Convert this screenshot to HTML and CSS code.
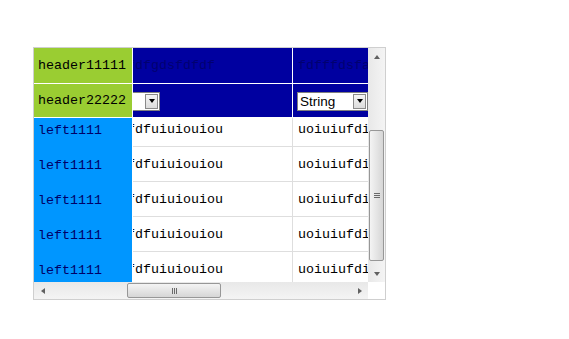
FILE: index.html
```html
<!DOCTYPE html>
<html lang="en">
<head>
  <meta charset="UTF-8">
  <title>Frozen Grid</title>
  <link rel="stylesheet" href="styles.css">
</head>
<body>
  <div class="grid">
    <div class="main">
      <div class="frozen">
        <div class="fhead row1">header11111</div>
        <div class="fhead row2">header22222</div>
        <div class="fbody">
          <div class="fbody-inner">
            <div class="fcell">left1111</div>
            <div class="fcell">left1111</div>
            <div class="fcell">left1111</div>
            <div class="fcell">left1111</div>
            <div class="fcell">left1111</div>
          </div>
        </div>
      </div>
      <div class="data">
        <div class="data-inner">
          <div class="drow hrow row1">
            <div class="dcell col-a">fdfgdsfdfdf</div>
            <div class="dcell col-b">fdfffdsfadf</div>
          </div>
          <div class="drow hrow row2">
            <div class="dcell col-a">
              <div class="sel sel-small"><span class="sel-text"></span><span class="sel-btn"><i class="tri-down"></i></span></div>
            </div>
            <div class="dcell col-b">
              <div class="sel"><span class="sel-text">String</span><span class="sel-btn"><i class="tri-down"></i></span></div>
            </div>
          </div>
          <div class="dbody">
            <div class="dbody-inner">
              <div class="drow brow"><div class="dcell col-a">fdfuiuiouiou</div><div class="dcell col-b">uoiuiufdiuuu</div></div>
              <div class="drow brow"><div class="dcell col-a">fdfuiuiouiou</div><div class="dcell col-b">uoiuiufdiuuu</div></div>
              <div class="drow brow"><div class="dcell col-a">fdfuiuiouiou</div><div class="dcell col-b">uoiuiufdiuuu</div></div>
              <div class="drow brow"><div class="dcell col-a">fdfuiuiouiou</div><div class="dcell col-b">uoiuiufdiuuu</div></div>
              <div class="drow brow"><div class="dcell col-a">fdfuiuiouiou</div><div class="dcell col-b">uoiuiufdiuuu</div></div>
            </div>
          </div>
        </div>
      </div>
    </div>
    <!-- fake scrollbars -->
    <div class="vbar">
      <div class="sb-btn"><i class="arr arr-up"></i></div>
      <div class="vtrack"><div class="thumb vthumb"><span class="grip-v"></span></div></div>
      <div class="sb-btn"><i class="arr arr-down"></i></div>
    </div>
    <div class="hbar">
      <div class="sb-btn"><i class="arr arr-left"></i></div>
      <div class="htrack"><div class="thumb hthumb"><span class="grip-h"></span></div></div>
      <div class="sb-btn"><i class="arr arr-right"></i></div>
    </div>
    <div class="corner"></div>
  </div>
</body>
</html>
```

FILE: styles.css
```css
body {
  margin: 0;
  padding: 47px 0 0 33px;
  background: #fff;
  font-family: 'Liberation Mono', 'Courier New', monospace;
  font-size: 13.33px;
}
.grid {
  width: 351px;
  border: 1px solid #cfcfcf;
  display: grid;
  grid-template-columns: 334px 17px;
  grid-template-rows: 234px 17px;
}
.main {
  display: flex;
  overflow: hidden;
}
/* frozen left column */
.frozen {
  width: 98px;
  flex: none;
  border-right: 1px solid #fff;
  display: flex;
  flex-direction: column;
}
.fhead {
  background: #9acd32;
  color: #000;
  border-bottom: 1px solid #fff;
  padding-left: 4px;
  display: flex;
  align-items: center;
}
.row1 { height: 35px; }
.row2 { height: 33px; }
.fbody {
  flex: 1;
  overflow: hidden;
  background: #0096ff;
}
.fbody-inner { margin-top: -5px; }
.fcell {
  height: 35px;
  padding-left: 4px;
  display: flex;
  align-items: center;
  color: #000066;
}
/* scrolled data area */
.data {
  flex: 1;
  overflow: hidden;
  display: flex;
  flex-direction: column;
}
.data-inner {
  margin-left: -16px;
  display: flex;
  flex-direction: column;
  height: 100%;
}
.drow {
  display: flex;
  flex: none;
}
.dcell {
  flex: none;
  white-space: nowrap;
  overflow: hidden;
  display: flex;
  align-items: center;
  padding-left: 5px;
  box-sizing: border-box;
}
.col-a { width: 176px; }
.col-b { width: 160px; }
.hrow .col-a, .brow .col-a { padding-left: 10px; }
.hrow {
  background: #0000a0;
  border-bottom: 1px solid #fff;
  color: #000070;
}
.hrow .col-a { border-right: 1px solid #fff; }
.hrow.row2 .col-a { padding-left: 12px; }
.hrow.row2 .col-b { padding-left: 4px; }
.dbody {
  flex: 1;
  overflow: hidden;
}
.dbody-inner { margin-top: -6px; }
.brow {
  height: 35px;
  box-sizing: border-box;
  border-bottom: 1px solid #dedede;
  color: #000;
  background: #fff;
}
.brow .col-a { border-right: 1px solid #dedede; }
/* select look-alike */
.sel {
  display: flex;
  width: 71px;
  height: 19px;
  box-sizing: border-box;
  border: 1px solid #7f7f7f;
  background: #fff;
  margin-top: 1px;
}
.sel-small { width: 31px; }
.sel-text {
  flex: 1;
  font-family: 'Liberation Sans', Arial, sans-serif;
  font-size: 13.5px;
  line-height: 17px;
  padding-left: 2px;
  color: #000;
}
.sel-btn {
  width: 13px;
  margin: 1px;
  box-sizing: border-box;
  border: 1px solid #8a8a8a;
  background: linear-gradient(#f4f4f4, #dcdcdc);
  display: flex;
  align-items: center;
  justify-content: center;
}
.tri-down {
  width: 0;
  height: 0;
  border-left: 3.5px solid transparent;
  border-right: 3.5px solid transparent;
  border-top: 4px solid #000;
}
/* scrollbars */
.vbar, .hbar {
  display: flex;
  background: #f0f0f0;
}
.vbar { flex-direction: column; background: linear-gradient(90deg, #e8e8e8, #f4f4f4); }
.hbar { background: linear-gradient(#e8e8e8, #f4f4f4); }
.sb-btn {
  width: 17px;
  height: 17px;
  flex: none;
  display: flex;
  align-items: center;
  justify-content: center;
}
.vtrack { flex: 1; padding-top: 65px; }
.htrack { flex: 1; padding-left: 76px; display: flex; }
.thumb {
  box-sizing: border-box;
  border: 1px solid #979797;
  border-radius: 2px;
  display: flex;
  align-items: center;
  justify-content: center;
}
.vthumb {
  height: 131px;
  width: 15px;
  margin-left: 1px;
  background: linear-gradient(90deg, #f4f4f4, #e2e2e2 60%, #d6d6d6);
}
.hthumb {
  width: 94px;
  height: 15px;
  margin-top: 1px;
  background: linear-gradient(#f4f4f4, #e2e2e2 60%, #d6d6d6);
}
.grip-v {
  width: 6px;
  height: 5px;
  background: repeating-linear-gradient(#6a6a6a 0 1px, transparent 1px 2px);
}
.grip-h {
  width: 5px;
  height: 6px;
  background: repeating-linear-gradient(90deg, #6a6a6a 0 1px, transparent 1px 2px);
}
.arr { width: 0; height: 0; }
.arr-up {
  border-left: 3.5px solid transparent;
  border-right: 3.5px solid transparent;
  border-bottom: 4px solid #606060;
}
.arr-down {
  border-left: 3.5px solid transparent;
  border-right: 3.5px solid transparent;
  border-top: 4px solid #606060;
}
.arr-left {
  border-top: 3.5px solid transparent;
  border-bottom: 3.5px solid transparent;
  border-right: 4px solid #606060;
}
.arr-right {
  border-top: 3.5px solid transparent;
  border-bottom: 3.5px solid transparent;
  border-left: 4px solid #606060;
}
.corner { background: #fff; }
```
